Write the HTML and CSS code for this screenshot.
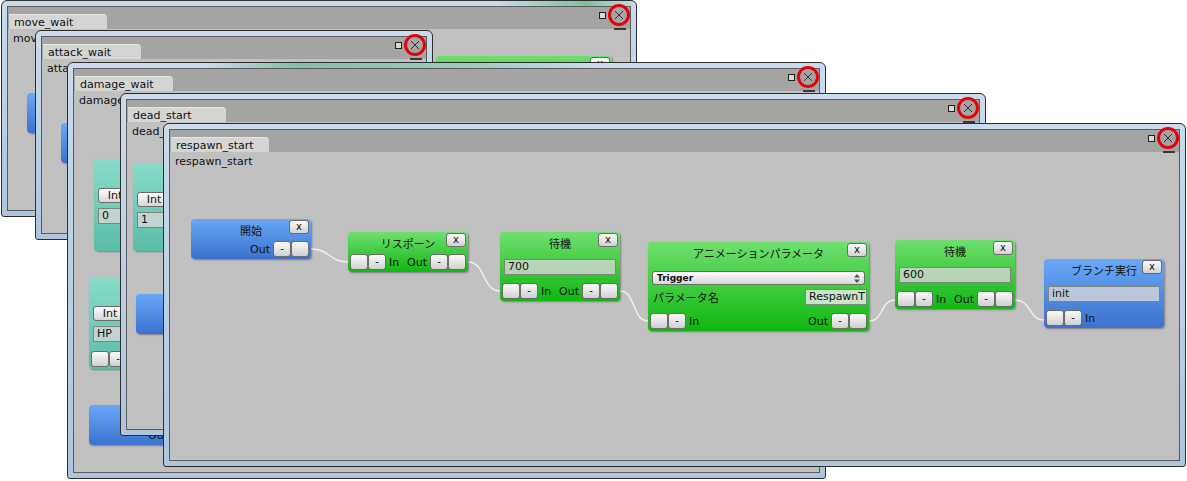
FILE: index.html
```html
<!DOCTYPE html>
<html lang="ja">
<head>
  <meta charset="UTF-8" />
  <title>respawn_start</title>
  <link rel="stylesheet" href="styles.css">
</head>
<body>
  <div class="desk">

    <!-- move_wait -->
    <section class="win w1">
      <div class="win-in">
        <div class="win-head"><span class="tab">move_wait</span></div>
        <div class="win-body">
          <p class="win-name">move_wait</p>
          <div class="node blue n-a">
            <div class="node-title">開始</div>
            <span class="node-x">x</span>
            <div class="node-row end"><span class="lbl">Out</span><span class="pin">-</span><span class="pin"></span></div>
          </div>
          <div class="node green n-b">
            <div class="node-title">待機</div>
            <span class="node-x">x</span>
            <div class="field">1000</div>
          </div>
        </div>
      </div>
      <span class="ctl-sq"></span>
      <span class="ctl-x"><svg width="10" height="10" viewBox="0 0 10 10"><path d="M1 1L9 9M9 1L1 9" stroke="#333" stroke-width="1"/></svg></span>
      <span class="ctl-bar"></span>
    </section>

    <!-- attack_wait -->
    <section class="win w2">
      <div class="win-in">
        <div class="win-head"><span class="tab">attack_wait</span></div>
        <div class="win-body">
          <p class="win-name">attack_wait</p>
          <div class="node blue n-a">
            <div class="node-title">開始</div>
            <span class="node-x">x</span>
            <div class="node-row end"><span class="lbl">Out</span><span class="pin">-</span><span class="pin"></span></div>
          </div>
        </div>
      </div>
      <span class="ctl-sq"></span>
      <span class="ctl-x"><svg width="10" height="10" viewBox="0 0 10 10"><path d="M1 1L9 9M9 1L1 9" stroke="#333" stroke-width="1"/></svg></span>
      <span class="ctl-bar"></span>
    </section>

    <!-- damage_wait -->
    <section class="win w3">
      <div class="win-in">
        <div class="win-head"><span class="tab">damage_wait</span></div>
        <div class="win-body">
          <p class="win-name">damage_wait</p>
          <div class="node teal n-c">
            <div class="node-title">変数</div>
            <span class="node-x">x</span>
            <div class="sel int">Int</div>
            <div class="field">0</div>
          </div>
          <div class="node teal n-d">
            <div class="node-title">変数</div>
            <span class="node-x">x</span>
            <div class="sel int">Int</div>
            <div class="field">HP</div>
            <div class="node-row"><span class="pin"></span><span class="pin">-</span><span class="lbl">In</span><span class="sp"></span><span class="lbl">Out</span><span class="pin">-</span><span class="pin"></span></div>
          </div>
          <div class="node blue n-e">
            <div class="node-title">開始</div>
            <span class="node-x">x</span>
            <div class="node-row end"><span class="lbl">Out</span><span class="pin">-</span><span class="pin"></span></div>
          </div>
        </div>
      </div>
      <span class="ctl-sq"></span>
      <span class="ctl-x"><svg width="10" height="10" viewBox="0 0 10 10"><path d="M1 1L9 9M9 1L1 9" stroke="#333" stroke-width="1"/></svg></span>
      <span class="ctl-bar"></span>
    </section>

    <!-- dead_start -->
    <section class="win w4">
      <div class="win-in">
        <div class="win-head"><span class="tab">dead_start</span></div>
        <div class="win-body">
          <p class="win-name">dead_start</p>
          <div class="node teal n-f">
            <div class="node-title">変数</div>
            <span class="node-x">x</span>
            <div class="sel int">Int</div>
            <div class="field">1</div>
          </div>
          <div class="node blue n-g">
            <div class="node-title">開始</div>
            <span class="node-x">x</span>
            <div class="node-row end"><span class="lbl">Out</span><span class="pin">-</span><span class="pin"></span></div>
          </div>
        </div>
      </div>
      <span class="ctl-sq"></span>
      <span class="ctl-x"><svg width="10" height="10" viewBox="0 0 10 10"><path d="M1 1L9 9M9 1L1 9" stroke="#333" stroke-width="1"/></svg></span>
      <span class="ctl-bar"></span>
    </section>

    <!-- respawn_start -->
    <section class="win w5">
      <div class="win-in">
        <div class="win-head"><span class="tab">respawn_start</span></div>
        <div class="win-body">
          <p class="win-name">respawn_start</p>

          <svg class="wires" width="1009" height="308" viewBox="0 0 1009 308">
            <path d="M141 97C160 97 159 110 178 110"/>
            <path d="M298 110C316 110 312 139 330 139"/>
            <path d="M450 139C466 139 462 169 478 169"/>
            <path d="M699 169C714 169 710 148 725 148"/>
            <path d="M845 148C862 148 858 168 874 168"/>
          </svg>

          <div class="node blue n1">
            <div class="node-title">開始</div>
            <span class="node-x">x</span>
            <div class="node-row end"><span class="lbl">Out</span><span class="pin">-</span><span class="pin"></span></div>
          </div>

          <div class="node green n2">
            <div class="node-title">リスポーン</div>
            <span class="node-x">x</span>
            <div class="node-row"><span class="pin"></span><span class="pin">-</span><span class="lbl">In</span><span class="sp"></span><span class="lbl">Out</span><span class="pin">-</span><span class="pin"></span></div>
          </div>

          <div class="node green n3">
            <div class="node-title">待機</div>
            <span class="node-x">x</span>
            <div class="field">700</div>
            <div class="node-row"><span class="pin"></span><span class="pin">-</span><span class="lbl">In</span><span class="sp"></span><span class="lbl">Out</span><span class="pin">-</span><span class="pin"></span></div>
          </div>

          <div class="node green n4">
            <div class="node-title">アニメーションパラメータ</div>
            <span class="node-x">x</span>
            <div class="sel">Trigger<svg width="6" height="9" viewBox="0 0 6 9"><path d="M3 0L6 3.5H0ZM3 9L6 5.5H0Z" fill="#555"/></svg></div>
            <div class="prow"><span>パラメータ名</span><span class="pfield">RespawnT</span></div>
            <div class="node-row"><span class="pin"></span><span class="pin">-</span><span class="lbl">In</span><span class="sp"></span><span class="lbl">Out</span><span class="pin">-</span><span class="pin"></span></div>
          </div>

          <div class="node green n5">
            <div class="node-title">待機</div>
            <span class="node-x">x</span>
            <div class="field">600</div>
            <div class="node-row"><span class="pin"></span><span class="pin">-</span><span class="lbl">In</span><span class="sp"></span><span class="lbl">Out</span><span class="pin">-</span><span class="pin"></span></div>
          </div>

          <div class="node blue n6">
            <div class="node-title">ブランチ実行</div>
            <span class="node-x">x</span>
            <div class="field">init</div>
            <div class="node-row"><span class="pin"></span><span class="pin">-</span><span class="lbl">In</span></div>
          </div>
        </div>
      </div>
      <span class="ctl-sq"></span>
      <span class="ctl-x"><svg width="10" height="10" viewBox="0 0 10 10"><path d="M1 1L9 9M9 1L1 9" stroke="#333" stroke-width="1"/></svg></span>
      <span class="ctl-bar"></span>
    </section>

  </div>
</body>
</html>
```

FILE: styles.css
```css
body { margin: 0; background: #fff; font-family: "DejaVu Sans", "Noto Sans CJK JP", sans-serif; font-size: 11px; color: #111; }
.desk { position: relative; width: 1187px; height: 481px; overflow: hidden; }

/* windows */
.win {
  position: absolute; box-sizing: border-box; display: flex;
  border: 1px solid #2e2e2e; border-radius: 6px 6px 3px 3px;
  padding: 5px;
  background: linear-gradient(#c9dbec, #aec5dd);
}
.win-in { flex: 1; min-width: 0; display: flex; flex-direction: column; border: 1px solid #5c5c5c; background: #c1c1c1; }
.win-head { height: 22px; box-sizing: border-box; padding: 7px 0 0 1px; background: #a4a4a4; display: flex; }
.tab {
  width: 98px; height: 15px; box-sizing: border-box;
  padding-left: 5px; line-height: 15px;
  background: #d5d5d5; border-top: 1px solid #e6e6e6;
  border-radius: 0 4px 0 0;
}
.win-body { flex: 1; position: relative; overflow: hidden; }
.win-name { margin: 3px 0 0 5px; line-height: 14px; }

.w1 { left: 1px; top: 0; width: 636px; height: 217px; }
.w2 { left: 35px; top: 30px; width: 398px; height: 210px; }
.w3 { left: 67px; top: 62px; width: 759px; height: 417px; }
.w4 { left: 120px; top: 93px; width: 866px; height: 343px; }
.w5 { left: 163px; top: 123px; width: 1023px; height: 344px; }

/* glass tint on the top frame */
.w1 {
  background:
    linear-gradient(90deg, transparent 78%, rgba(70, 170, 90, .55) 92%, transparent) top / 100% 6px no-repeat,
    linear-gradient(#c9dbec, #aec5dd);
}
.w3 {
  background:
    linear-gradient(90deg, transparent 18%, rgba(70, 160, 100, .5) 30%, rgba(90, 170, 120, .35) 55%, transparent 70%) top / 100% 6px no-repeat,
    linear-gradient(#c9dbec, #aec5dd);
}

.ctl-sq { position: absolute; right: 30px; top: 11px; width: 5px; height: 5px; border: 1px solid #222; background: #d8d8d8; }
.ctl-x {
  position: absolute; right: 6px; top: 3px; width: 22px; height: 22px; box-sizing: border-box;
  border: 3px solid #e5000a; border-radius: 50%;
  display: flex; align-items: center; justify-content: center;
}
.ctl-bar { position: absolute; right: 10px; top: 27px; width: 12px; height: 2px; background: #3a3a3a; }

/* wires */
.wires { position: absolute; left: 0; top: 0; }
.wires path { fill: none; stroke: #efefef; stroke-width: 1.5; }

/* nodes */
.node {
  position: absolute; box-sizing: border-box; width: 120px;
  padding: 1px 2px 2px; border-radius: 4px;
  display: flex; flex-direction: column;
  box-shadow: 1px 1px 2px rgba(0, 0, 0, .35);
}
.blue { background: linear-gradient(#68a8f7, #3b72cf); }
.green { background: linear-gradient(#6fdf6f, #10b710); }
.teal { background: linear-gradient(#88dcc9, #5abca7); }

.node-title { height: 20px; box-sizing: border-box; padding: 4px 20px 0; line-height: 16px; text-align: center; white-space: nowrap; }
.node-x {
  position: absolute; right: 2px; top: 1px; width: 20px; height: 14px; box-sizing: border-box;
  border: 1px solid #6c6c6c; border-radius: 3px;
  background: linear-gradient(#fbfbfb, #d2d2d2);
  font-size: 10px; line-height: 11px; text-align: center;
}
.node-row { display: flex; align-items: center; height: 16px; margin-top: 1px; }
.node-row.end { justify-content: flex-end; }
.field + .node-row, .prow + .node-row { margin-top: 8px; }
.pin {
  width: 18px; height: 16px; box-sizing: border-box;
  border: 1px solid #6c6c6c; border-radius: 3px;
  background: linear-gradient(#fbfbfb, #cfcfcf);
  font-size: 10px; line-height: 13px; text-align: center;
}
.lbl { padding: 0 3px; }
.sp { flex: 1; }

.field {
  margin: 6px 2px 0; height: 16px; box-sizing: border-box;
  border: 1px solid #7d857d; background: rgba(214, 214, 214, .8);
  padding: 0 3px; line-height: 14px;
}
.sel {
  margin: 8px 2px 0; height: 14px; box-sizing: border-box;
  border: 1px solid #6c6c6c; border-radius: 3px;
  background: linear-gradient(#fdfdfd, #d6d6d6);
  padding: 0 4px; display: flex; justify-content: space-between; align-items: center;
  font-size: 9px; font-weight: bold;
}
.sel.int { width: 34px; font-weight: normal; font-size: 11px; justify-content: center; height: 15px; }
.sel.int + .field { margin-top: 5px; }
.prow { display: flex; justify-content: space-between; align-items: center; margin-top: 4px; height: 16px; padding-left: 3px; }
.pfield {
  width: 62px; height: 16px; box-sizing: border-box;
  border: 1px solid #7d857d; background: #c9e4c9;
  padding-left: 3px; line-height: 14px; overflow: hidden; white-space: nowrap;
}

/* node places */
.n-a { left: 19px; top: 64px; }
.n-b { left: 428px; top: 27px; width: 176px; }
.n-c { left: 20px; top: 68px; width: 150px; height: 92px; }
.n-d { left: 15px; top: 186px; width: 150px; }
.n-d .node-row { margin-top: 9px; }
.n-e { left: 15px; top: 314px; }
.n-f { left: 6px; top: 41px; width: 150px; height: 88px; }
.n-g { left: 9px; top: 172px; }
.n1 { left: 21px; top: 67px; }
.n2 { left: 178px; top: 80px; }
.n3 { left: 330px; top: 80px; }
.n4 { left: 478px; top: 90px; width: 221px; }
.n5 { left: 725px; top: 88px; }
.n6 { left: 874px; top: 107px; }
```
